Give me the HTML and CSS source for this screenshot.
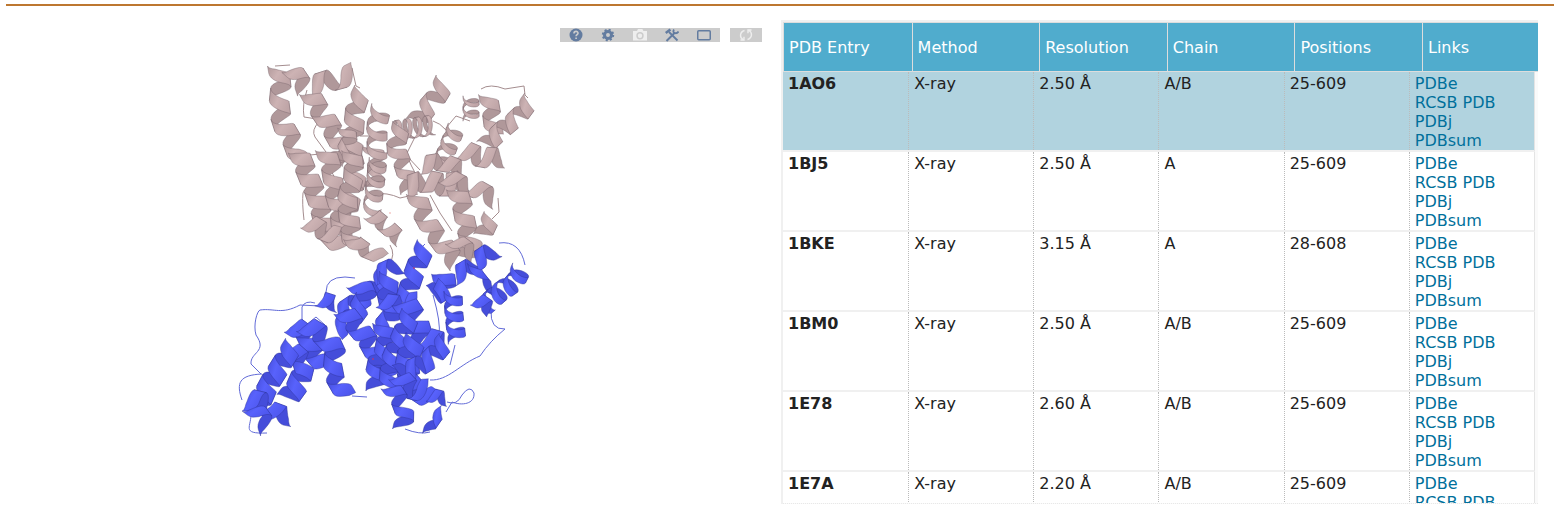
FILE: index.html
```html
<!DOCTYPE html>
<html lang="en">
<head>
<meta charset="utf-8">
<title>Structure</title>
<link rel="stylesheet" href="styles.css">
</head>
<body>
<main class="page">
<header class="section-head"><h2>Structure</h2></header>
<div class="structure">
<section class="viewer" aria-label="Structure viewer">
<div class="toolbar">
<div class="tools">
<button type="button" aria-label="Help"><svg viewBox="0 0 14 14"><circle cx="7" cy="7" r="6.5" fill="currentColor"/><path d="M5 5.4C5 2.6 9.1 2.8 9 5.2C9 6.6 7.1 6.7 7.1 8.3M7.1 9.6V11.1" fill="none" stroke="#ccc" stroke-width="1.6"/></svg></button>
<button type="button" aria-label="Settings"><svg viewBox="0 0 14 14"><circle cx="7" cy="7" r="3.5" fill="none" stroke="currentColor" stroke-width="3"/><circle cx="7" cy="7" r="5.2" fill="none" stroke="currentColor" stroke-width="2" stroke-dasharray="2.04 2.04"/></svg></button>
<button type="button" class="off" aria-label="Screenshot"><svg viewBox="0 0 14 14"><path fill="currentColor" fill-rule="evenodd" d="M1 3H4L5 1H9.400L10.400 3H14V12.500H0V3ZM7 4A3.700 3.700 0 1 0 7 11.400A3.700 3.700 0 1 0 7 4ZM7 5.500A2.200 2.200 0 1 1 7 9.900A2.200 2.200 0 1 1 7 5.500Z"/></svg></button>
<button type="button" aria-label="Tools"><svg viewBox="0 0 14 14" fill="none" stroke="currentColor"><path d="M1.500 13L10 4.500" stroke-width="2"/><path d="M9 1.500Q7.500 4 9.500 5Q12 6 13.500 3.500M4 4L12.500 12.500" stroke-width="1.800"/><path d="M.7 5L5.400 1.500" stroke-width="2.600"/></svg></button>
<button type="button" aria-label="Expand"><svg viewBox="0 0 14 14"><rect x=".75" y="2.750" width="12.500" height="9" rx="1" fill="none" stroke="currentColor" stroke-width="1.500"/></svg></button>
</div>
<div class="tools">
<button type="button" class="off" aria-label="Reload"><svg viewBox="0 0 14 14" fill="none" stroke="currentColor" stroke-width="1.400"><path d="M5.500 2.500C.5 4 .5 9.500 4 11.500M1.500 12H5V8.800M8.500 11.500C13.500 10 13.500 4.500 10 2.500M12.500 2H9V5.200"/></svg></button>
</div>
</div>
<svg class="molecule" id="molecule" viewBox="0 0 756 440" role="img" aria-label="Protein ribbon model"></svg>
</section>
<section class="entries">
<table>
<thead><tr><th>PDB Entry</th><th>Method</th><th>Resolution</th><th>Chain</th><th>Positions</th><th>Links</th></tr></thead>
<tbody>
<tr class="active"><td>1AO6</td><td>X-ray</td><td>2.50 Å</td><td>A/B</td><td>25-609</td><td><a href="#">PDBe</a><a href="#">RCSB PDB</a><a href="#">PDBj</a><a href="#">PDBsum</a></td></tr>
<tr><td>1BJ5</td><td>X-ray</td><td>2.50 Å</td><td>A</td><td>25-609</td><td><a href="#">PDBe</a><a href="#">RCSB PDB</a><a href="#">PDBj</a><a href="#">PDBsum</a></td></tr>
<tr><td>1BKE</td><td>X-ray</td><td>3.15 Å</td><td>A</td><td>28-608</td><td><a href="#">PDBe</a><a href="#">RCSB PDB</a><a href="#">PDBj</a><a href="#">PDBsum</a></td></tr>
<tr><td>1BM0</td><td>X-ray</td><td>2.50 Å</td><td>A/B</td><td>25-609</td><td><a href="#">PDBe</a><a href="#">RCSB PDB</a><a href="#">PDBj</a><a href="#">PDBsum</a></td></tr>
<tr><td>1E78</td><td>X-ray</td><td>2.60 Å</td><td>A/B</td><td>25-609</td><td><a href="#">PDBe</a><a href="#">RCSB PDB</a><a href="#">PDBj</a><a href="#">PDBsum</a></td></tr>
<tr><td>1E7A</td><td>X-ray</td><td>2.20 Å</td><td>A/B</td><td>25-609</td><td><a href="#">PDBe</a><a href="#">RCSB PDB</a><a href="#">PDBj</a><a href="#">PDBsum</a></td></tr>
</tbody>
</table>
</section>
</div>
</main>
<script src="molecule.js"></script>
</body>
</html>
```
FILE: styles.css
```css
* { box-sizing: border-box; }
body { margin: 0; background: #fff; color: #222; font: 16px/19px Verdana, "DejaVu Sans", sans-serif; }
.page { padding: 0 6px; }
.section-head { display: flex; align-items: flex-end; height: 6px; overflow: hidden; border-bottom: 2px solid #bd7730; }
.section-head h2 { margin: 0; font-size: 20px; line-height: 22px; font-weight: 400; color: #e9bd94; }
.structure { display: grid; grid-template-columns: 1fr 1fr; gap: 2px; padding-top: 14px; }
.viewer { padding-top: 8px; min-width: 0; }
.toolbar { display: flex; justify-content: flex-end; gap: 10px; padding-right: 17px; }
.tools { display: flex; background: #ccc; }
.tools button { display: flex; justify-content: center; width: 32px; height: 14px; padding: 0; border: 0; background: none; color: #637ca0; }
.tools button.off { color: #eee; }
.tools svg { width: 14px; height: 14px; }
.molecule { display: block; width: 100%; max-width: 756px; }
.entries { padding-right: 16px; min-width: 0; }
table { display: block; border-top: 2px solid #f0f0f0; border-left: 2px solid #f0f0f0; }
thead, tbody { display: block; }
tr { display: grid; grid-template-columns: repeat(6, 1fr); }
thead tr { grid-template-columns: repeat(5, 11fr) 10fr; background: #50accd; border: 1px solid #ddd; border-right: 0; }
th { padding: 15px 5px 14px; color: #fff; font-weight: 400; text-align: left; border-left: 1px solid #ddd; }
th:first-child { border-left: 0; }
tbody { max-height: 432px; padding-right: 3px; overflow: hidden; background: #fafafa; border-bottom: 1px dotted #e8e8e8; }
tbody tr { background: #fff; border-bottom: 2px solid #f0f0f0; border-right: 1px solid #e4e4e4; }
tbody tr.active { background: #b1d3df; }
td { padding: 2px 5px 0; border-left: 1px dotted #bbb; }
td:first-child { border-left: 0; font-weight: 700; }
td a { display: block; color: #00709b; text-decoration: none; }
```
FILE: molecule.js
```js
const NS = "http://www.w3.org/2000/svg";
const svg = document.getElementById("molecule");
const root = document.createElementNS(NS, "g");
root.setAttribute("transform", "translate(-6 -42)");
svg.appendChild(root);

const palettes = {
  pink: { front: ["#b0989a", "#cdb3b4", "#bfa5a7"], back: "#b0989a", edge: "#75626a", loop: "#a48d8f" },
  blue: { front: ["#454dda", "#5862fc", "#4d56ec"], back: "#454dda", edge: "#2c3296", loop: "#626bd8" }
};

function add(tag, attrs, parent = root) {
  const el = document.createElementNS(NS, tag);
  for (const k in attrs) el.setAttribute(k, attrs[k]);
  parent.appendChild(el);
  return el;
}

for (const name in palettes) {
  const g = add("linearGradient", { id: name, x1: 0, y1: 0, x2: 1, y2: 0.5 });
  palettes[name].front.forEach((c, i) => add("stop", { offset: i / 2, "stop-color": c }, g));
}

function along(points, d) {
  for (let i = 1; i < points.length; i++) {
    const [ax, ay] = points[i - 1], [bx, by] = points[i];
    const len = Math.hypot(bx - ax, by - ay);
    if (d <= len || i === points.length - 1) {
      return [ax + (bx - ax) * d / len, ay + (by - ay) * d / len, (bx - ax) / len, (by - ay) / len];
    }
    d -= len;
  }
}

function pairs(flat) {
  const out = [];
  for (let i = 0; i < flat.length; i += 2) out.push([flat[i], flat[i + 1]]);
  return out;
}

// Helix ribbon: axis points, radius, pitch of one turn, ribbon width, tilt toward the viewer.
function helix(color, axis, r = 10, pitch = 21, width = 10, tilt = 0.15) {
  const pts = pairs(axis);
  const w = width > 8 ? width * 1.15 : width;
  let total = 0;
  for (let i = 1; i < pts.length; i++) total += Math.hypot(pts[i][0] - pts[i - 1][0], pts[i][1] - pts[i - 1][1]);
  const halves = Math.max(2, Math.round(total / (pitch * 1.18) * 2));
  const p = palettes[color];
  const bands = [];
  for (let h = 0; h < halves; h++) {
    const a = [], b = [];
    const steps = 10;
    for (let s = 0; s <= steps; s++) {
      const t = (h + s / steps) / halves;
      const angle = (h + s / steps) * Math.PI;
      const here = t * total;
      const [x, y] = along(pts, here);
      const [x0, y0] = along(pts, Math.max(0, here - 8));
      const [x1, y1] = along(pts, Math.min(total, here + 8));
      const m = Math.hypot(x1 - x0, y1 - y0) || 1;
      const ux = (x1 - x0) / m, uy = (y1 - y0) / m;
      const c = r * Math.cos(angle), k = r * tilt * Math.sin(angle);
      const px = x - uy * c + ux * k, py = y + ux * c + uy * k;
      const end = (h === 0 && s < 4) ? 0.6 + s * 0.1 : (h === halves - 1 && s > 6) ? 0.6 + (steps - s) * 0.1 : 1;
      a.push([px - ux * w / 2 * end, py - uy * w / 2 * end]);
      b.unshift([px + ux * w / 2 * end, py + uy * w / 2 * end]);
    }
    const d = "M" + a.concat(b).map(q => q[0].toFixed(1) + " " + q[1].toFixed(1)).join("L") + "Z";
    bands.push({ d, front: h % 2 === 0 });
  }
  for (const front of [false, true]) {
    for (const band of bands) {
      if (band.front !== front) continue;
      add("path", { d: band.d, fill: front ? `url(#${color})` : p.back, stroke: p.edge, "stroke-width": 0.5, "stroke-opacity": 0.8, "stroke-linejoin": "round" });
    }
  }
}

function loop(color, d) {
  add("path", { d, fill: "none", stroke: palettes[color].loop, "stroke-width": 1 });
}

[
  "M275 66L290 65", "M352 68L356 86L360 88", "M307 90Q302 105 304 117L317 119", "M319 122Q311 130 315 137L326 152",
  "M481 89Q490 83 505 89L524 86L525 95L528 98", "M446 135V128L456 116L470 121", "M433 121Q440 123 446 130",
  "M415 137L406 155L420 170", "M304 220Q302 203 303 193Q305 186 315 187", "M310 155Q325 151 330 168L345 200",
  "M374 194Q387 192 400 198L418 194", "M430 195L440 213L452 231", "M498 198L499 212L492 219",
  "M360 136H375", "M390 245Q396 255 389 264", "M408 158Q415 175 422 183"
].forEach(d => loop("pink", d));

[
  [[372, 145, 378, 170, 370, 190], 10, 18, 7],
  [[378, 160, 372, 210], 9, 13, 6, 0.7],
  [[350, 150, 357, 175, 350, 200, 345, 225], 10, 20, 10],
  [[278, 68, 281, 85, 279, 105, 283, 125, 293, 142, 299, 160], 10, 25, 11],
  [[290, 69, 300, 78, 304, 90], 8, 22, 11],
  [[310, 88, 325, 81, 340, 79, 352, 73], 10, 28, 11],
  [[310, 93, 318, 108, 329, 124, 339, 142, 349, 158], 10, 22, 11],
  [[362, 93, 356, 105, 354, 125, 353, 145, 350, 162], 10, 20, 11],
  [[381, 108, 377, 125, 377, 155], 10, 17, 8, 0.5],
  [[346, 128, 350, 142, 335, 160], 8, 18, 8],
  [[444, 82, 438, 95, 426, 109, 416, 122], 10, 20, 9],
  [[393, 131, 433, 125], 10, 9, 4, 0.5],
  [[471, 97, 471, 120], 8, 10, 4, 0.6],
  [[488, 96, 491, 110, 494, 132], 9, 23, 10],
  [[530, 101, 519, 116, 503, 129, 485, 146], 9, 17, 9, 0.3],
  [[456, 128, 447, 150, 440, 168], 9, 13, 6, 0.6],
  [[463, 150, 480, 157, 502, 158], 10, 18, 9],
  [[299, 153, 307, 173, 315, 192, 321, 211, 326, 231, 340, 246], 10, 20, 12],
  [[326, 151, 332, 170, 334, 190, 340, 210, 342, 234], 10, 20, 11],
  [[352, 153, 354, 175, 347, 200, 350, 225, 353, 245], 10, 18, 10],
  [[401, 126, 396, 148, 405, 170, 409, 190], 9, 20, 9],
  [[423, 165, 442, 162, 462, 170], 9, 19, 10],
  [[407, 187, 425, 181, 445, 185, 464, 181], 11, 18, 10],
  [[445, 176, 465, 186, 480, 190, 495, 200], 9, 22, 10],
  [[457, 190, 463, 208, 466, 226, 472, 246, 465, 258], 10, 19, 11],
  [[417, 195, 422, 212, 432, 230, 444, 246, 456, 262], 10, 22, 11],
  [[491, 218, 483, 235], 9, 20, 9],
  [[452, 239, 466, 248, 475, 256], 8, 20, 9],
  [[371, 214, 386, 226, 400, 239], 8, 17, 9, 0.4],
  [[354, 238, 360, 250, 370, 249, 379, 258], 10, 19, 10],
  [[308, 222, 325, 232, 336, 235], 9, 19, 10]
].forEach(([axis, ...shape]) => helix("pink", axis, ...shape));

[
  "M326 292Q326 277 345 277L355 278", "M261 374L251 364C250 352 268 352 256 335C253 325 257 311 260 310C275 308 281 315 300 305L320 306L333 307",
  "M242 400C236 383 239 375 262 374", "M251 412C252 427 240 434 267 433", "M302 322V307Q305 300 315 303", "M306 325L316 317L325 325",
  "M499 243Q520 240 525 265", "M491 310Q490 330 505 329Q490 341 480 356C460 364 448 381 430 380", "M433 295Q441 323 439 335",
  "M455 345L450 365", "M447 402Q457 406 462 395Q470 384 474 393C475 404 462 406 452 402L446 412", "M352 396L367 397", "M405 429Q420 435 430 432", "M425 244L418 251"
].forEach(d => loop("blue", d));

[
  [[385, 275, 374, 290, 358, 302, 340, 314], 10, 20, 11],
  [[320, 299, 336, 304], 8, 16, 9, 0.4],
  [[356, 283, 367, 294, 355, 315, 338, 330], 10, 20, 10],
  [[375, 277, 388, 268, 401, 266], 8, 21, 10],
  [[344, 311, 355, 325, 367, 339, 378, 359, 391, 374], 10, 19, 11],
  [[293, 326, 307, 335, 311, 350, 323, 364], 10, 19, 12],
  [[305, 325, 322, 335, 335, 350, 333, 373, 345, 394], 10, 20, 12],
  [[289, 350, 304, 363, 299, 383, 288, 398], 11, 18, 11],
  [[292, 347, 281, 365, 268, 386, 260, 405], 10, 20, 12],
  [[246, 401, 261, 401, 274, 413, 289, 416], 10, 20, 11],
  [[250, 407, 262, 416, 267, 430], 8, 22, 10],
  [[389, 276, 387, 295, 393, 315, 380, 330], 10, 20, 11],
  [[425, 247, 417, 265, 410, 285, 405, 302], 10, 19, 11],
  [[382, 300, 394, 304, 415, 301], 9, 18, 10],
  [[404, 302, 416, 320, 421, 338, 445, 345], 12, 19, 11],
  [[383, 325, 386, 345, 377, 365, 376, 388], 10, 17, 10],
  [[410, 315, 400, 340, 391, 360, 389, 385], 10, 17, 10],
  [[415, 340, 407, 360, 410, 385, 429, 398], 11, 18, 11],
  [[445, 342, 430, 360, 413, 369, 398, 374], 10, 17, 9],
  [[398, 375, 412, 390, 426, 389], 10, 18, 9],
  [[390, 386, 400, 400, 405, 415, 402, 428], 9, 21, 9],
  [[430, 395, 446, 399], 7, 20, 8],
  [[443, 413, 433, 420, 430, 432], 7, 20, 9],
  [[443, 275, 446, 288, 434, 294], 11, 12, 10],
  [[453, 293, 454, 315, 457, 341], 9, 13, 8, 0.5],
  [[455, 276, 472, 266, 485, 255, 495, 250], 9, 19, 10],
  [[475, 264, 481, 281, 496, 289], 7, 24, 9],
  [[521, 269, 515, 282, 500, 292, 487, 304], 10, 13, 7, 0.6],
  [[476, 300, 485, 304, 490, 310], 7, 22, 9]
].forEach(([axis, ...shape]) => helix("blue", axis, ...shape));

add("circle", { cx: 390, cy: 213, r: 1, fill: "#f5c9c6" });
add("circle", { cx: 414, cy: 268, r: 1, fill: "#a33a8c" });
add("circle", { cx: 373, cy: 359, r: 1, fill: "#a33a8c" });
```
